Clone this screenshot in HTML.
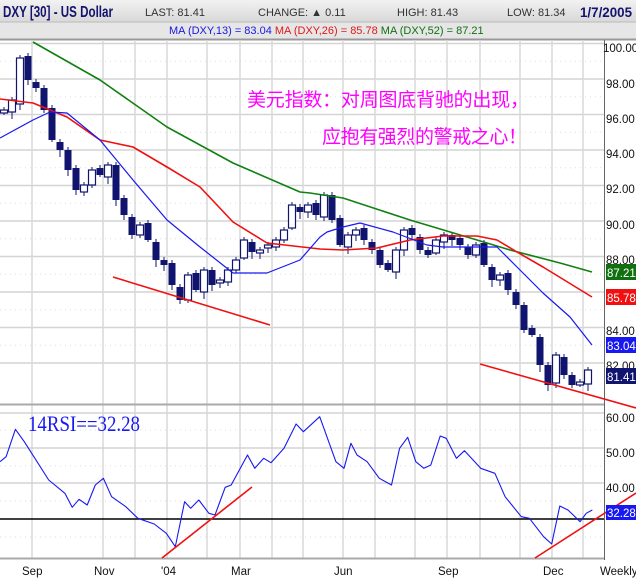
<!DOCTYPE html>
<html><head><meta charset="utf-8"><style>
body{margin:0;background:#fff;width:636px;height:580px;overflow:hidden;font-family:"Liberation Sans",Arial,sans-serif}
</style></head><body>
<svg id="s" width="636" height="580" xmlns="http://www.w3.org/2000/svg" font-family="Liberation Sans, Arial, sans-serif">
<defs><linearGradient id="hg" x1="0" y1="0" x2="0" y2="1"><stop offset="0" stop-color="#f2f2f2"/><stop offset="1" stop-color="#d8d8d8"/></linearGradient></defs>
<rect x="0" y="0" width="636" height="22" fill="url(#hg)"/>
<rect x="0" y="22" width="636" height="17" fill="#e6e6e6"/>
<line x1="0" y1="22" x2="636" y2="22" stroke="#bbb"/>
<line x1="0" y1="39.5" x2="636" y2="39.5" stroke="#999" stroke-width="2"/>
<text x="3" y="17" font-size="16" font-weight="bold" fill="#14146e" textLength="110" lengthAdjust="spacingAndGlyphs">DXY [30] - US Dollar</text>
<text x="145" y="16" font-size="11" fill="#333">LAST: 81.41</text>
<text x="258" y="16" font-size="11" fill="#333">CHANGE: ▲ 0.11</text>
<text x="397" y="16" font-size="11" fill="#333">HIGH: 81.43</text>
<text x="507" y="16" font-size="11" fill="#333">LOW: 81.34</text>
<text x="580" y="17" font-size="14" font-weight="bold" fill="#14146e" textLength="52" lengthAdjust="spacingAndGlyphs">1/7/2005</text>
<text x="169" y="34" font-size="11"><tspan fill="#1818e0">MA (DXY,13) = 83.04 </tspan><tspan fill="#e01818">MA (DXY,26) = 85.78 </tspan><tspan fill="#107010">MA (DXY,52) = 87.21</tspan></text>
<g id="g"></g>
</svg>
<script>
var N="http://www.w3.org/2000/svg",G=document.getElementById('g');
function el(t,a,txt){var e=document.createElementNS(N,t);for(var k in a)e.setAttribute(k,a[k]);if(txt!==undefined)e.textContent=txt;G.appendChild(e);return e;}
var vx=[32,103,135,167,207,240,272,303,343,375,415,447,480,520,552,583];
// main grid
for(var p=100;p>=82;p-=1){var y=79+(98-p)*17.75;
 if(p%2==0)el('line',{x1:0,x2:604,y1:y,y2:y,stroke:'#d4d4d4','stroke-width':1.5});
 else el('line',{x1:0,x2:604,y1:y,y2:y,stroke:'#ddd','stroke-dasharray':'1 4'});}
vx.forEach(function(x){el('line',{x1:x,x2:x,y1:40,y2:404,stroke:'#d8d8d8','stroke-width':1.5});el('line',{x1:x,x2:x,y1:405,y2:558,stroke:'#d8d8d8','stroke-width':1.5});});
// rsi grid
[413,448,483].forEach(function(y){el('line',{x1:0,x2:604,y1:y,y2:y,stroke:'#d4d4d4','stroke-width':1.5});});
[430,466,501,537].forEach(function(y){el('line',{x1:0,x2:604,y1:y,y2:y,stroke:'#ddd','stroke-dasharray':'1 4'});});
el('line',{x1:0,x2:604,y1:519,y2:519,stroke:'#000','stroke-width':1.5});
el('line',{x1:0,x2:604,y1:404.5,y2:404.5,stroke:'#aaa','stroke-width':2});
el('line',{x1:0,x2:604,y1:558.5,y2:558.5,stroke:'#aaa','stroke-width':2});
el('line',{x1:604.5,x2:604.5,y1:40,y2:560,stroke:'#666'});
// axis labels
var lab=[[100,47],[98,83],[96,118],[94,153],[92,188],[90,224],[88,259],[84,330],[82,365]];
lab.forEach(function(l){el('text',{x:l[1]==47?603:606,y:l[1]+5,'font-size':11.5,fill:'#111'},l[0].toFixed(2));});
[[60,418],[50,453],[40,488]].forEach(function(l){el('text',{x:606,y:l[1]+4,'font-size':11.5,fill:'#111'},l[0].toFixed(2));});
// candles
var cx=[4,12,20,28,36,44,52,60,68,76,84,92,100,108,116,124,132,140,148,156,164,172,180,188,196,204,212,220,228,236,244,252,260,268,276,284,292,300,308,316,324,332,340,348,356,364,372,380,388,396,404,412,420,428,436,444,452,460,468,476,484,492,500,508,516,524,532,540,548,556,564,572,580,588];
var cc=[110,100,58,80,88,110,140,150,170,190,185,170,175,165,200,215,235,225,240,260,265,285,300,275,290,270,285,280,270,260,240,252,250,245,240,230,205,212,205,215,195,220,245,235,230,240,250,265,270,250,230,235,250,255,240,235,240,245,255,245,265,280,275,290,305,330,335,365,385,355,375,385,382,370];
var prev=115;
for(var i=0;i<cc.length;i++){var o=prev+((i*5)%3-1)*2,c=cc[i];if(i==2)o=104;var t=Math.min(o,c),b=Math.max(o,c);if(b-t<3){b=t+3;}
 var w1=3+(i*7)%7,w2=2+(i*11)%6;
 el('line',{x1:cx[i],x2:cx[i],y1:t-w1,y2:b+w2,stroke:'#10146e','stroke-width':1});
 if(c<o) el('rect',{x:cx[i]-3.5,y:t,width:7,height:b-t,fill:'#fff',stroke:'#10146e','stroke-width':1.2});
 else el('rect',{x:cx[i]-3.5,y:t,width:7,height:b-t,fill:'#10146e'});
 prev=c;}
function pl(pts,col,w){el('polyline',{points:pts.map(function(p){return p.join(',')}).join(' '),fill:'none',stroke:col,'stroke-width':w||1.3,'stroke-linejoin':'round'});}
pl([[33,42],[100,80],[167,127],[233,163],[300,192],[310,193],[343,198],[410,220],[477,240],[510,250],[560,263],[592,272]],'#108010',1.6);
pl([[0,99],[33,103],[67,117],[100,140],[133,147],[167,167],[200,187],[233,222],[267,243],[320,249],[343,250],[377,248],[410,240],[443,236],[477,236],[497,240],[517,252],[543,267],[592,297]],'#f01010',1.6);
pl([[0,138],[33,120],[50,112],[67,113],[100,140],[133,180],[167,220],[200,247],[233,273],[267,273],[300,260],[320,237],[327,232],[343,227],[360,223],[393,232],[427,245],[443,247],[497,247],[517,267],[543,293],[570,317],[592,345]],'#1818f0',1.2);
el('line',{x1:113,y1:277,x2:270,y2:325,stroke:'#f01010','stroke-width':1.6});
el('line',{x1:480,y1:364,x2:636,y2:408,stroke:'#f01010','stroke-width':1.6});
// price boxes
[[272,'#107010','87.21'],[297,'#f01010','85.78'],[345,'#1818f0','83.04'],[376,'#10146e','81.41']].forEach(function(b){
 el('rect',{x:606,y:b[0]-8,width:30,height:16,fill:b[1]});el('text',{x:607,y:b[0]+5,'font-size':11.5,fill:'#fff'},b[2]);});
// chinese text
el('text',{x:247,y:106,'font-size':19,fill:'#ff00ff','font-family':'Noto Sans CJK SC, WenQuanYi Zen Hei, sans-serif',textLength:282,lengthAdjust:'spacing'},'美元指数：对周图底背驰的出现，');
el('text',{x:322,y:143,'font-size':19,fill:'#ff00ff','font-family':'Noto Sans CJK SC, WenQuanYi Zen Hei, sans-serif',textLength:205,lengthAdjust:'spacing'},'应抱有强烈的警戒之心！');
// rsi
var rz=[[0,185],[15,170],[38,88],[60,125],[120,240],[160,280],[178,322],[195,298],[215,315],[235,255],[255,235],[275,290],[310,320],[340,355],[380,372],[410,400],[432,440],[455,305],[470,325],[490,300],[515,340],[530,345],[555,262],[570,255],[610,165],[628,205],[650,175],[668,188],[700,145],[730,72],[748,95],[788,50],[828,185],[848,205],[865,130],[880,165],[905,185],[935,235],[965,255],[985,145],[1005,112],[1025,185],[1045,205],[1062,195],[1085,108],[1100,115],[1125,175],[1145,152],[1185,205],[1220,220],[1245,290],[1285,350],[1305,355],[1340,410],[1360,432],[1380,318],[1400,330],[1430,365],[1445,340],[1460,330]];
pl(rz.map(function(p){return [(p[0]/2.465).toFixed(1),(400+p[1]/3).toFixed(1)]}),'#1818f0',1.1);
el('line',{x1:162,y1:558,x2:252,y2:487,stroke:'#f01010','stroke-width':1.6});
el('line',{x1:535,y1:558,x2:636,y2:493,stroke:'#f01010','stroke-width':1.6});
el('rect',{x:606,y:505,width:30,height:15,fill:'#1818f0'});el('text',{x:607,y:517,'font-size':11.5,fill:'#fff'},'32.28');
el('text',{x:28,y:431,'font-size':22,fill:'#1818f0','font-family':'Liberation Serif, serif',textLength:112,lengthAdjust:'spacingAndGlyphs'},'14RSI==32.28');
[['Sep',22],['Nov',94],["'04",161],['Mar',231],['Jun',334],['Sep',438],['Dec',543],['Weekly',600]].forEach(function(l){el('text',{x:l[1],y:575,'font-size':11.5,fill:'#111'},l[0]);});
</script>
</body></html>
